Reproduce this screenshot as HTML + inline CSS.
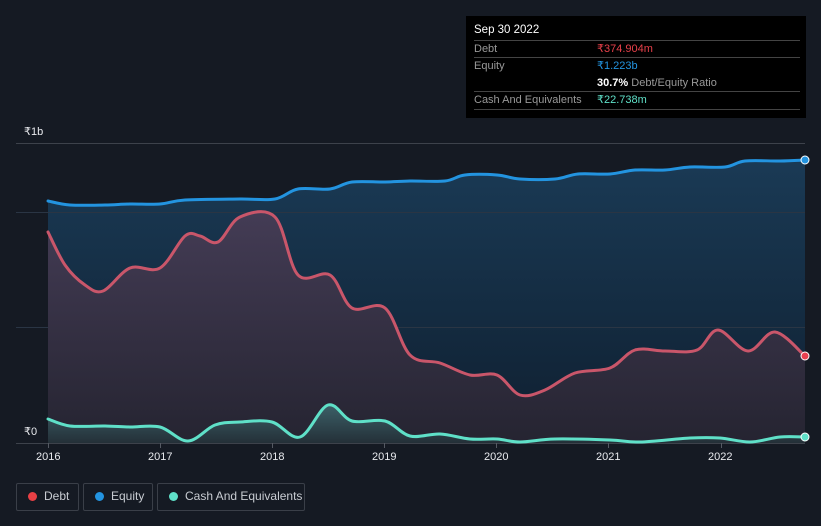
<!DOCTYPE html>
<html><head><meta charset="utf-8"><style>
html,body{margin:0;padding:0;background:#151a23;width:821px;height:526px;overflow:hidden;font-family:"Liberation Sans",sans-serif}
.tip{position:absolute;left:466px;top:16px;width:340px;height:102px;background:#000;color:#fff;font-size:11px}
.tip .row{position:absolute;left:8px;width:326px;border-top:1px solid #444;height:17px;line-height:17px}
.lg{position:absolute;top:483px;height:26px;border:1px solid #3a3f48;border-radius:2px;color:#c8ccd2;font-size:12px;line-height:24px}
.lg i{position:absolute;top:8px;left:11px;width:9px;height:9px;border-radius:50%}
.lg span{position:absolute;left:27px}
.ax{position:absolute;color:#e8eaee;font-size:11px}
</style></head><body>
<svg id="s" width="821" height="526" style="position:absolute;left:0;top:0">
<defs>
<linearGradient id="ge" x1="0" y1="0" x2="0" y2="1"><stop offset="0" stop-color="#1a3a55"/><stop offset="1" stop-color="#0f1f30"/></linearGradient>
<linearGradient id="gd" x1="0" y1="0" x2="0" y2="1"><stop offset="0" stop-color="#443c55"/><stop offset="1" stop-color="#252431"/></linearGradient>
<linearGradient id="gc" x1="0" y1="0" x2="0" y2="1"><stop offset="0" stop-color="#3c6068"/><stop offset="1" stop-color="#243038"/></linearGradient>
</defs>
<line x1="16" y1="143.5" x2="805" y2="143.5" stroke="#3d424b"/>
<path id="fe" fill="url(#ge)"/>
<line x1="16" y1="212.5" x2="805" y2="212.5" stroke="#2a3544"/>
<line x1="16" y1="327.5" x2="805" y2="327.5" stroke="#2a3544"/>
<path id="fd" fill="url(#gd)"/>
<path id="fc" fill="url(#gc)"/>
<line x1="16" y1="443.5" x2="805" y2="443.5" stroke="#3d424b"/>
<g fill="none" stroke-width="3" stroke-linejoin="round" stroke-linecap="round">
<path id="le" stroke="#2394e0"/>
<path id="ld" stroke="#c9566a"/>
<path id="lc" stroke="#5fe0c8"/>
</g>
<circle cx="805" cy="160" r="4" fill="#2394e0" stroke="#fff" stroke-width="1"/>
<circle cx="805" cy="356" r="4" fill="#e84050" stroke="#fff" stroke-width="1"/>
<circle cx="805" cy="437" r="4" fill="#5fe0c8" stroke="#fff" stroke-width="1"/>
<g stroke="#555a63"><line x1="48.5" y1="443" x2="48.5" y2="448"/><line x1="160.5" y1="443" x2="160.5" y2="448"/><line x1="272.5" y1="443" x2="272.5" y2="448"/><line x1="384.5" y1="443" x2="384.5" y2="448"/><line x1="496.5" y1="443" x2="496.5" y2="448"/><line x1="608.5" y1="443" x2="608.5" y2="448"/><line x1="721.5" y1="443" x2="721.5" y2="448"/></g>
</svg>
<script>
function sm(p){var d="M"+p[0][0]+","+p[0][1];for(var i=0;i<p.length-1;i++){var a=p[i],b=p[i+1],z=p[i-1]||a,c=p[i+2]||b;
var c1x=a[0]+(b[0]-z[0])/6,c1y=a[1]+(b[1]-z[1])/6,c2x=b[0]-(c[0]-a[0])/6,c2y=b[1]-(c[1]-a[1])/6;
c1x=Math.min(Math.max(c1x,a[0]),b[0]);c2x=Math.min(Math.max(c2x,a[0]),b[0]);
d+=" C"+c1x+","+c1y+" "+c2x+","+c2y+" "+b[0]+","+b[1];}return d;}
function P(s){return s.trim().split(/\s+/).map(function(t){return t.split(",").map(Number)});}
var E=P("48,201 70,205 105,205 130,204 160,204 185,200 240,199 275,199 298,189 330,189 352,182 385,182 410,181 445,181 465,175 497,175 520,179 555,179 578,174 610,174 635,170 665,170 690,167 725,167 745,161 780,161 805,160");
var D=P("48,232 65,265 85,285 103,291 130,268 160,268 185,236 200,236 218,242 240,217 275,217 298,275 330,275 352,308 385,308 410,355 440,363 470,375 497,375 520,395 545,390 575,373 610,368 635,350 665,351 697,350 718,330 748,351 775,332 805,356");
var C=P("48,419 70,426 105,426 130,427 160,427 188,441 215,425 240,422 272,422 300,437 328,405 352,421 385,421 410,436 440,434 470,439 497,439 520,442 555,439 610,440 640,442 690,438 720,438 750,442 780,437 805,437");
function set(id,p){var d=sm(p);document.getElementById("l"+id).setAttribute("d",d);document.getElementById("f"+id).setAttribute("d",d+" L805,443 L48,443 Z");}
set("e",E);set("d",D);set("c",C);
</script>
<div class="ax" style="left:24px;top:125px">₹1b</div>
<div class="ax" style="left:24px;top:425px">₹0</div>
<div class="ax" style="left:36px;top:451px">2016</div>
<div class="ax" style="left:148px;top:451px">2017</div>
<div class="ax" style="left:260px;top:451px">2018</div>
<div class="ax" style="left:372px;top:451px">2019</div>
<div class="ax" style="left:484px;top:451px">2020</div>
<div class="ax" style="left:596px;top:451px">2021</div>
<div class="ax" style="left:708px;top:451px">2022</div>
<div class="tip">
<div style="position:absolute;left:8px;top:8px;font-size:11.5px">Sep 30 2022</div>
<div class="row" style="top:24px"><span style="color:#999">Debt</span><span style="position:absolute;left:123px;color:#e8404a">₹374.904m</span></div>
<div class="row" style="top:41px"><span style="color:#999">Equity</span><span style="position:absolute;left:123px;color:#2394e0">₹1.223b</span></div>
<div style="position:absolute;left:131px;top:59px;line-height:17px"><b>30.7%</b> <span style="color:#999">Debt/Equity Ratio</span></div>
<div class="row" style="top:75px;border-bottom:1px solid #444"><span style="color:#999">Cash And Equivalents</span><span style="position:absolute;left:123px;color:#5fe0c8">₹22.738m</span></div>
</div>
<div class="lg" style="left:16px;width:61px"><i style="background:#e84045"></i><span>Debt</span></div>
<div class="lg" style="left:83px;width:68px"><i style="background:#2394e0"></i><span>Equity</span></div>
<div class="lg" style="left:157px;width:146px"><i style="background:#5fe0c8"></i><span>Cash And Equivalents</span></div>
</body></html>
